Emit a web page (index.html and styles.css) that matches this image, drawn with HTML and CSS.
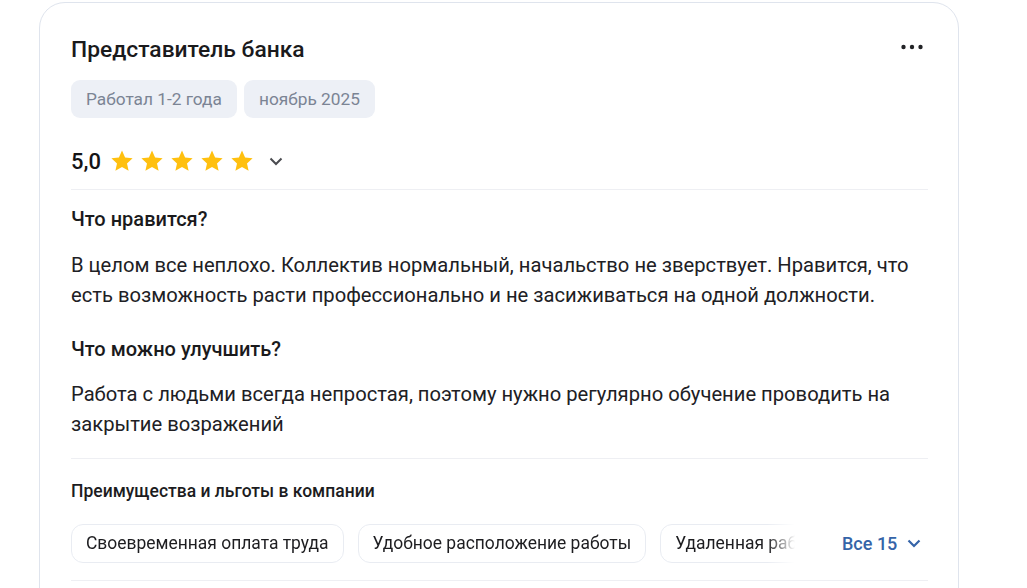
FILE: index.html
```html
<!DOCTYPE html>
<html lang="ru">
<head>
<meta charset="utf-8">
<title>Отзыв</title>
<link rel="stylesheet" href="styles.css">
</head>
<body>
<div class="card">
  <div class="head">
    <h2 class="title">Представитель банка</h2>
    <button class="more" aria-label="Ещё">
      <svg width="22" height="6" viewBox="0 0 22 6"><circle cx="2.5" cy="3" r="2.2"/><circle cx="11" cy="3" r="2.2"/><circle cx="19.5" cy="3" r="2.2"/></svg>
    </button>
  </div>
  <div class="tags">
    <span class="tag">Работал 1-2 года</span>
    <span class="tag">ноябрь 2025</span>
  </div>
  <div class="rating">
    <span class="score">5,0</span>
    <span class="stars">
      <svg class="star" viewBox="0 0 24 24"><path d="M12 1.6l3.1 6.9 7.5.8-5.6 5.1 1.6 7.4L12 18l-6.6 3.8 1.6-7.4-5.6-5.1 7.5-.8z"/></svg>
      <svg class="star" viewBox="0 0 24 24"><path d="M12 1.6l3.1 6.9 7.5.8-5.6 5.1 1.6 7.4L12 18l-6.6 3.8 1.6-7.4-5.6-5.1 7.5-.8z"/></svg>
      <svg class="star" viewBox="0 0 24 24"><path d="M12 1.6l3.1 6.9 7.5.8-5.6 5.1 1.6 7.4L12 18l-6.6 3.8 1.6-7.4-5.6-5.1 7.5-.8z"/></svg>
      <svg class="star" viewBox="0 0 24 24"><path d="M12 1.6l3.1 6.9 7.5.8-5.6 5.1 1.6 7.4L12 18l-6.6 3.8 1.6-7.4-5.6-5.1 7.5-.8z"/></svg>
      <svg class="star" viewBox="0 0 24 24"><path d="M12 1.6l3.1 6.9 7.5.8-5.6 5.1 1.6 7.4L12 18l-6.6 3.8 1.6-7.4-5.6-5.1 7.5-.8z"/></svg>
    </span>
    <svg class="chev" width="14" height="9" viewBox="0 0 14 9"><path d="M1.5 1.5L7 7l5.5-5.5"/></svg>
  </div>
  <div class="section">
    <h3 class="q">Что нравится?</h3>
    <p class="a a1">В целом все неплохо. Коллектив нормальный, начальство не зверствует. Нравится, что есть возможность расти профессионально и не засиживаться на одной должности.</p>
    <h3 class="q q2">Что можно улучшить?</h3>
    <p class="a a2">Работа с людьми всегда непростая, поэтому нужно регулярно обучение проводить на закрытие возражений</p>
  </div>
  <div class="benefits">
    <h4 class="btitle">Преимущества и льготы в компании</h4>
    <div class="brow">
      <div class="chips">
        <span class="chip">Своевременная оплата труда</span>
        <span class="chip">Удобное расположение работы</span>
        <span class="chip">Удаленная работа</span>
        <span class="chip">ДМС</span>
      </div>
      <button class="all">Все 15
        <svg width="14" height="9" viewBox="0 0 14 9"><path d="M1.5 1.5L7 7l5.5-5.5"/></svg>
      </button>
    </div>
  </div>
</div>
</body>
</html>
```

FILE: styles.css
```css
* { box-sizing: border-box; }
html, body { margin: 0; background: #fff; }
body {
  font-family: Roboto, "Noto Sans", Arial, sans-serif;
  color: #1b1b1d;
  padding: 2px 0 0 39px;
}
.card {
  width: 920px;
  height: 620px;
  border: 1px solid #dfe4ed;
  border-radius: 26px;
  background: #fff;
  padding: 32px 30px 0 31px;
}
.head {
  display: flex;
  justify-content: space-between;
  align-items: flex-start;
  height: 30px;
}
.title {
  margin: 0;
  font-size: 22.8px;
  line-height: 30px;
  font-weight: 500;
  color: #1a1a1c;
}
.more {
  border: 0;
  background: none;
  padding: 0;
  margin: 9px 5px 0 0;
  width: 22px;
  height: 6px;
  display: flex;
  fill: #222326;
}
.tags {
  display: flex;
  gap: 7px;
  margin-top: 15px;
}
.tag {
  background: #edf0f6;
  color: #7b8494;
  font-size: 17.3px;
  line-height: 22px;
  height: 38px;
  padding: 8px 15px;
  border-radius: 9px;
}
.rating {
  display: flex;
  align-items: center;
  height: 34px;
  margin-top: 26px;
}
.score {
  font-size: 22px;
  font-weight: 500;
  color: #141416;
  margin-right: 9px;
}
.stars {
  display: flex;
  gap: 6px;
}
.star {
  width: 24px;
  height: 24px;
  fill: #ffc00f;
}
.chev {
  margin-left: 15px;
  fill: none;
  stroke: #4a4b50;
  stroke-width: 2;
}
.section {
  border-top: 1px solid #eeeff3;
  margin-top: 11px;
  padding-top: 17px;
}
.q {
  margin: 0;
  font-size: 20px;
  font-weight: 500;
  line-height: 24px;
  color: #1a1a1c;
}
.q2 { margin-top: 27px; }
.a {
  margin: 0;
  font-size: 20.2px;
  line-height: 30px;
  color: #202024;
}
.a1 { margin-top: 19px; }
.a2 { margin-top: 18px; }
.benefits {
  border-top: 1px solid #eeeff3;
  margin-top: 19px;
  padding-top: 20px;
  border-bottom: 1px solid #eeeff3;
  padding-bottom: 17px;
}
.btitle {
  margin: 0;
  font-size: 17.5px;
  font-weight: 500;
  line-height: 24px;
  color: #1c1c1e;
}
.brow {
  display: flex;
  align-items: center;
  margin-top: 21px;
}
.chips {
  display: flex;
  gap: 14px;
  width: 724px;
  flex: none;
  overflow: hidden;
  -webkit-mask-image: linear-gradient(to right, #000 calc(100% - 28px), transparent 100%);
  mask-image: linear-gradient(to right, #000 calc(100% - 28px), transparent 100%);
}
.chip {
  flex: none;
  border: 1px solid #e9ecf2;
  border-radius: 12px;
  padding: 0 14px;
  height: 39px;
  line-height: 37px;
  font-size: 17.45px;
  color: #1d1d20;
  background: #fff;
}
.all {
  margin-left: 47px;
  border: 0;
  background: none;
  padding: 0;
  font-family: inherit;
  font-size: 18px;
  font-weight: 500;
  color: #3564a8;
  display: flex;
  align-items: center;
  gap: 10px;
  white-space: nowrap;
}
.all svg {
  fill: none;
  stroke: #3564a8;
  stroke-width: 2.2;
}
```
